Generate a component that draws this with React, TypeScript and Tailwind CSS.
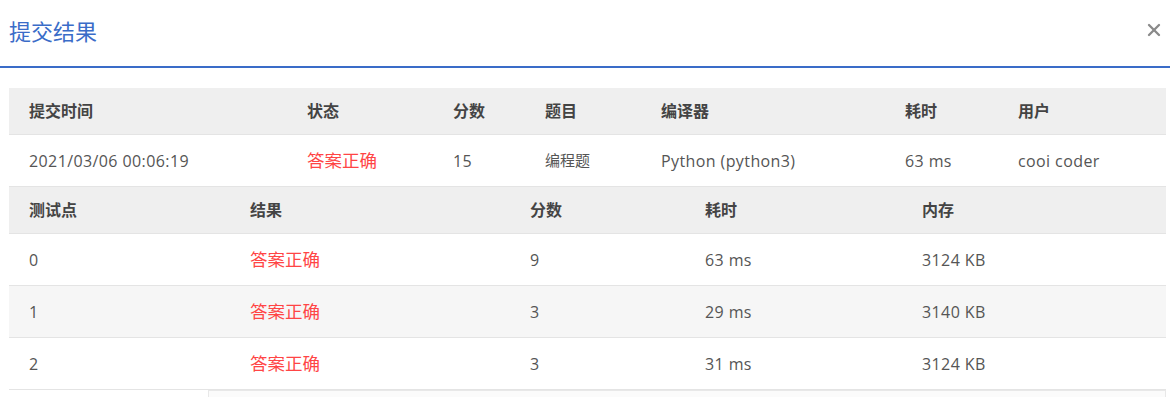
import { X } from "lucide-react";

const font = { fontFamily: '"Segoe UI", "Open Sans", "Noto Sans CJK SC", sans-serif' };

const summaryCols = "grid-cols-[298px_146px_92px_116px_244px_113px_1fr]";
const caseCols = "grid-cols-[241px_280px_175px_217px_1fr]";

const cases = [
    { id: "0", score: "9", time: "63 ms", mem: "3124 KB" },
    { id: "1", score: "3", time: "29 ms", mem: "3140 KB" },
    { id: "2", score: "3", time: "31 ms", mem: "3124 KB" },
];

export default function App() {
    return (
        <div className="h-[397px] w-[1170px] overflow-hidden bg-white text-[16px] text-[#555]" style={font}>
            {/* header */}
            <div className="flex h-[66px] items-center justify-between pl-[9px] pr-[6px]">
                <h1 className="pb-[4px] text-[22px] text-[#3a6cc8]">提交结果</h1>
                <X className="mb-[6px] h-[20px] w-[20px] text-[#8a8a8a]" strokeWidth={2.8} />
            </div>
            <div className="h-[2px] bg-[#3a6cc8]" />

            <div className="mx-[9px] mt-[20px] w-[1157px]">
                <div className={`grid ${summaryCols} h-[47px] items-center bg-[#efefef] border-b border-[#e4e4e4] font-bold text-[#444]`}>
                    <div className="pl-5">提交时间</div>
                    <div>状态</div>
                    <div>分数</div>
                    <div>题目</div>
                    <div>编译器</div>
                    <div>耗时</div>
                    <div>用户</div>
                </div>
                <div className={`grid ${summaryCols} h-[52px] items-center border-b border-[#e4e4e4] tracking-[0.4px]`}>
                    <div className="pl-5">2021/03/06 00:06:19</div>
                    <div className="text-[17.5px] tracking-normal text-[#ff4545]">答案正确</div>
                    <div>15</div>
                    <div className="text-[15px] tracking-normal">编程题</div>
                    <div>Python (python3)</div>
                    <div>63 ms</div>
                    <div>cooi coder</div>
                </div>

                <div className={`grid ${caseCols} h-[47px] items-center bg-[#efefef] border-b border-[#e4e4e4] font-bold text-[#444]`}>
                    <div className="pl-5">测试点</div>
                    <div>结果</div>
                    <div>分数</div>
                    <div>耗时</div>
                    <div>内存</div>
                </div>
                {cases.map((c, i) => (
                    <div
                        key={c.id}
                        className={`grid ${caseCols} h-[52px] items-center border-b border-[#e4e4e4] tracking-[0.4px] ${i % 2 === 1 ? "bg-[#f6f6f6]" : "bg-white"}`}
                    >
                        <div className="pl-5">{c.id}</div>
                        <div className="text-[17.5px] tracking-normal text-[#ff4545]">答案正确</div>
                        <div>{c.score}</div>
                        <div>{c.time}</div>
                        <div>{c.mem}</div>
                    </div>
                ))}
                <div className="ml-[199px] h-[10px] border-l border-r border-t border-[#e8e8e8] bg-[#fbfbfb]" />
            </div>
        </div>
    );
}
